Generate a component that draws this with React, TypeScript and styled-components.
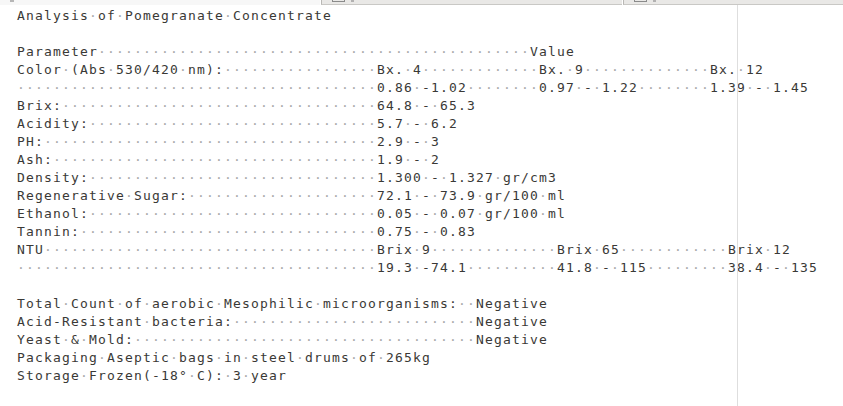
import React from "react";
import styled, { createGlobalStyle } from "styled-components";

const Global = createGlobalStyle`
  html, body { margin: 0; padding: 0; background: #ffffff; }
  body { overflow: hidden; }
`;

const Window = styled.div`
  width: 843px;
  height: 406px;
  display: flex;
  flex-direction: column;
  background: #ffffff;
`;

const TabBar = styled.div`
  height: 5px;
  flex: 0 0 5px;
  display: flex;
  overflow: hidden;
`;

const Tab = styled.div<{ $active?: boolean; $width: number }>`
  width: ${(p) => (p.$width ? `${p.$width}px` : "auto")};
  flex: ${(p) => (p.$width ? "0 0 auto" : "1 1 auto")};
  height: 5px;
  box-sizing: border-box;
  display: flex;
  align-items: flex-start;
  gap: 6px;
  padding-left: 10px;
  background: ${(p) => (p.$active ? "#f7f7f7" : "#e9e8e6")};
  border-left: ${(p) => (p.$active ? "none" : "1px solid #b9b8b5")};
  border-bottom: ${(p) => (p.$active ? "none" : "1px solid #c9c8c5")};
  margin-left: ${(p) => (p.$active ? "0" : "1px")};
`;

const TabIcon = styled.div`
  width: 13px;
  height: 2px;
  box-sizing: border-box;
  border: 1px solid #8a8a8a;
  border-top: none;
`;

const TabTick = styled.div<{ $w: number }>`
  width: ${(p) => p.$w}px;
  height: 2px;
  background: #9a9a9a;
  opacity: 0.7;
`;

const Editor = styled.div`
  position: relative;
  flex: 1 1 auto;
  padding: 2px 0 0 17px;
  background: #ffffff;
`;

const Margin = styled.div`
  position: absolute;
  top: 0;
  bottom: 0;
  left: 737px;
  width: 1px;
  background: #dedede;
`;

const Line = styled.div`
  height: 18px;
  line-height: 18px;
  white-space: pre;
  font-family: "DejaVu Sans Mono", monospace;
  font-size: 13px;
  letter-spacing: calc(9px - 0.60205em);
  color: #3a3936;
`;

const Ws = styled.span`
  color: #a9a9a9;
`;

type Part = [number, string];

const build = (...parts: Part[]): string => {
  let s = "";
  for (const [col, text] of parts) {
    while (s.length < col) s += " ";
    s += text;
  }
  return s;
};

const lines: string[] = [
  build([0, "Analysis of Pomegranate Concentrate"]),
  "",
  build([0, "Parameter"], [57, "Value"]),
  build([0, "Color (Abs 530/420 nm):"], [40, "Bx. 4"], [58, "Bx. 9"], [77, "Bx. 12"]),
  build([40, "0.86 -1.02"], [58, "0.97 - 1.22"], [77, "1.39 - 1.45"]),
  build([0, "Brix:"], [40, "64.8 - 65.3"]),
  build([0, "Acidity:"], [40, "5.7 - 6.2"]),
  build([0, "PH:"], [40, "2.9 - 3"]),
  build([0, "Ash:"], [40, "1.9 - 2"]),
  build([0, "Density:"], [40, "1.300 - 1.327 gr/cm3"]),
  build([0, "Regenerative Sugar:"], [40, "72.1 - 73.9 gr/100 ml"]),
  build([0, "Ethanol:"], [40, "0.05 - 0.07 gr/100 ml"]),
  build([0, "Tannin:"], [40, "0.75 - 0.83"]),
  build([0, "NTU"], [40, "Brix 9"], [60, "Brix 65"], [79, "Brix 12"]),
  build([40, "19.3 -74.1"], [60, "41.8 - 115"], [79, "38.4 - 135"]),
  "",
  build([0, "Total Count of aerobic Mesophilic microorganisms:"], [51, "Negative"]),
  build([0, "Acid-Resistant bacteria:"], [51, "Negative"]),
  build([0, "Yeast & Mold:"], [51, "Negative"]),
  build([0, "Packaging Aseptic bags in steel drums of 265kg"]),
  build([0, "Storage Frozen(-18° C): 3 year"]),
];

const renderLine = (text: string) => {
  const runs = text.match(/( +|[^ ]+)/g) || [];
  return runs.map((r, i) =>
    r[0] === " " ? <Ws key={i}>{"·".repeat(r.length)}</Ws> : <span key={i}>{r}</span>
  );
};

export default function App() {
  return (
    <Window>
      <Global />
      <TabBar>
        <Tab $active $width={320}>
          <TabTick $w={4} />
        </Tab>
        <Tab $width={301}>
          <TabIcon />
          <TabTick $w={3} />
        </Tab>
        <Tab $width={0}>
          <TabIcon />
          <TabTick $w={3} />
        </Tab>
      </TabBar>
      <Editor>
        <Margin />
        {lines.map((l, i) => (
          <Line key={i}>{l ? renderLine(l) : null}</Line>
        ))}
      </Editor>
    </Window>
  );
}
